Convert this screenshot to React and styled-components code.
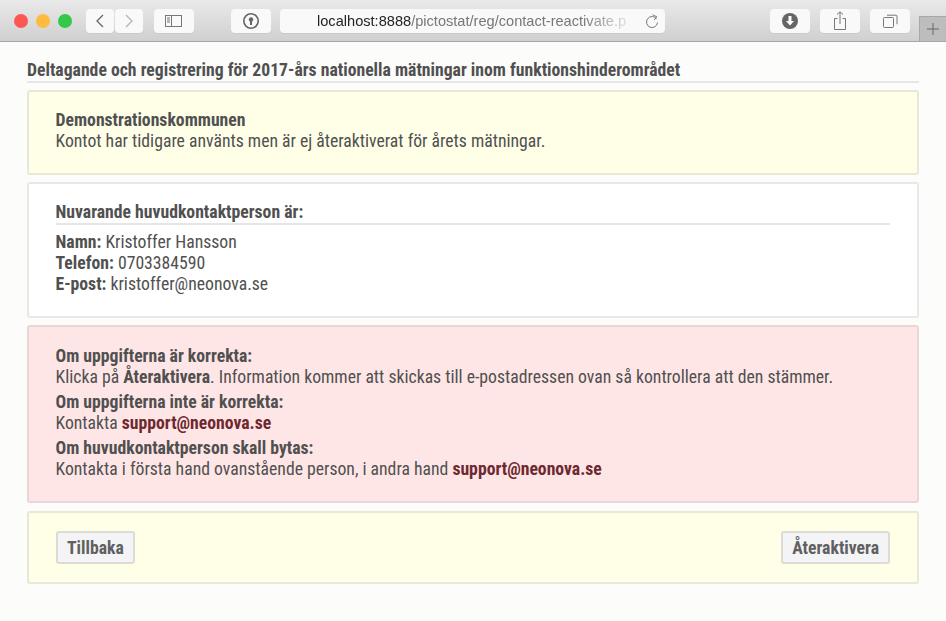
import React from "react";
import styled, { createGlobalStyle } from "styled-components";

const Global = createGlobalStyle`
  html, body { margin: 0; padding: 0; background: #fcfcfb; }
  body { font-family: "Roboto", "Liberation Sans", sans-serif; font-stretch: 75%; color: #505050; }
`;

const App = () => (
  <Window>
    <Global />
    <Toolbar>
      <Lights>
        <Light color="#fc5753" />
        <Light color="#fdbc40" />
        <Light color="#34c84a" />
      </Lights>
      <NavGroup>
        <ToolButton width={28}>
          <svg width="12" height="16" viewBox="0 0 12 16"><path d="M9 2 3 8l6 6" fill="none" stroke="#666" strokeWidth="1.3" /></svg>
        </ToolButton>
        <ToolButton width={28}>
          <svg width="12" height="16" viewBox="0 0 12 16"><path d="m3 2 6 6-6 6" fill="none" stroke="#b4b4b4" strokeWidth="1.3" /></svg>
        </ToolButton>
      </NavGroup>
      <SidebarSlot>
        <ToolButton width={40}>
          <svg width="18" height="14" viewBox="0 0 18 14" fill="none" stroke="#777" strokeWidth="1"><rect x=".5" y="1.5" width="16" height="11" /><path d="M6.5 1.5v11M2 4h3M2 6h3M2 8h3" /></svg>
        </ToolButton>
      </SidebarSlot>
      <KeySlot>
        <ToolButton width={40}>
          <svg width="18" height="18" viewBox="0 0 18 18"><circle cx="9" cy="9" r="7.2" fill="none" stroke="#666" strokeWidth="1.6" /><circle cx="9" cy="7.5" r="2.2" fill="#666" /><rect x="8" y="8" width="2" height="5" fill="#666" /></svg>
        </ToolButton>
      </KeySlot>
      <Address>
        <Url><b>localhost:8888</b>/pictostat/reg/contact-reactivate.p</Url>
        <svg width="14" height="15" viewBox="0 0 14 15" fill="none" stroke="#777" strokeWidth="1"><path d="M11.6 5A5.5 5.5 0 1 0 12.5 8.5" /><path d="M7.5 0.8 11.8 2.8 9.2 6" /></svg>
      </Address>
      <RightGroup>
        <ToolButton width={40}>
          <svg width="18" height="18" viewBox="0 0 18 18"><circle cx="9" cy="9" r="8" fill="#666" /><path d="M7.5 4h3v5h2.5L9 13.5 5 9h2.5z" fill="#fff" /></svg>
        </ToolButton>
        <ToolButton width={40}>
          <svg width="14" height="20" viewBox="0 0 14 20" fill="none" stroke="#777" strokeWidth="1"><path d="M4.5 7.5h-3v11h11v-11h-3M7 13V1M4 3.5 7 .8l3 2.7" /></svg>
        </ToolButton>
        <ToolButton width={40}>
          <svg width="15" height="15" viewBox="0 0 15 15" fill="none" stroke="#777" strokeWidth="1"><rect x=".5" y="3.5" width="10" height="10" rx="1" /><path d="M4 1.2h9a1 1 0 0 1 1 1v8" /></svg>
        </ToolButton>
      </RightGroup>
      <NewTab>
        <svg width="14" height="14" viewBox="0 0 14 14"><path d="M7 1v12M1 7h12" stroke="#666" strokeWidth="1" /></svg>
      </NewTab>
    </Toolbar>

    <Page>
      <Title>Deltagande och registrering för 2017-års nationella mätningar inom funktionshinderområdet</Title>

      <Card tone="note">
        <Line><strong>Demonstrationskommunen</strong></Line>
        <Line>Kontot har tidigare använts men är ej återaktiverat för årets mätningar.</Line>
      </Card>

      <Card tone="plain">
        <SubTitle>Nuvarande huvudkontaktperson är:</SubTitle>
        <Line><strong>Namn:</strong> Kristoffer Hansson</Line>
        <Line><strong>Telefon:</strong> 0703384590</Line>
        <Line><strong>E-post:</strong> kristoffer@neonova.se</Line>
      </Card>

      <Card tone="alert">
        <Para>
          <Line><strong>Om uppgifterna är korrekta:</strong></Line>
          <Line>Klicka på <strong>Återaktivera</strong>. Information kommer att skickas till e-postadressen ovan så kontrollera att den stämmer.</Line>
        </Para>
        <Para>
          <Line><strong>Om uppgifterna inte är korrekta:</strong></Line>
          <Line>Kontakta <MailLink>support@neonova.se</MailLink></Line>
        </Para>
        <Para>
          <Line><strong>Om huvudkontaktperson skall bytas:</strong></Line>
          <Line>Kontakta i första hand ovanstående person, i andra hand <MailLink>support@neonova.se</MailLink></Line>
        </Para>
      </Card>

      <ButtonCard>
        <ActionButton>Tillbaka</ActionButton>
        <ActionButton>Återaktivera</ActionButton>
      </ButtonCard>
    </Page>
  </Window>
);

export default App;

const tones = {
  note: { bg: "#ffffe8", border: "#e8e8d6", top: 18 },
  plain: { bg: "#ffffff", border: "#e8e8e8", top: 18 },
  alert: { bg: "#ffe6e6", border: "#ead6d6", top: 19 },
};

const Window = styled.div`
  width: 946px;
  height: 621px;
  overflow: hidden;
  display: flex;
  flex-direction: column;
`;

const Toolbar = styled.div`
  position: relative;
  height: 42px;
  flex: none;
  display: flex;
  align-items: flex-start;
  padding: 9px 0 0 14px;
  box-sizing: border-box;
  background: linear-gradient(#e9e9e9, #d0d0d0);
  border-bottom: 1px solid #a8a8a8;
`;

const Lights = styled.div`
  display: flex;
  gap: 8px;
  padding-top: 5px;
  margin-right: 14px;
`;

const Light = styled.span`
  width: 14px;
  height: 14px;
  border-radius: 50%;
  background: ${(p) => p.color};
`;

const NavGroup = styled.div`
  display: flex;
  gap: 1px;
`;

const SidebarSlot = styled.div`
  margin-left: 11px;
`;

const KeySlot = styled.div`
  margin-left: 37px;
`;

const ToolButton = styled.div`
  width: ${(p) => p.width}px;
  height: 24px;
  flex: none;
  display: flex;
  align-items: center;
  justify-content: center;
  background: #f9f9f9;
  border-radius: 4px;
  box-shadow: 0 1px 0 #cacaca;
`;

const Address = styled.div`
  width: 385px;
  height: 24px;
  margin-left: 9px;
  display: flex;
  align-items: center;
  justify-content: space-between;
  padding: 0 6px 0 37px;
  box-sizing: border-box;
  background: #f9f9f9;
  border-radius: 4px;
  box-shadow: 0 1px 0 #cacaca;
`;

const Url = styled.span`
  font-family: "Liberation Sans", Arial, sans-serif;
  font-stretch: normal;
  font-size: 14.6px;
  color: #777;
  white-space: nowrap;
  mask-image: linear-gradient(to right, #000 86%, rgba(0, 0, 0, 0.2) 100%);
  b {
    font-weight: normal;
    color: #222;
  }
`;

const RightGroup = styled.div`
  display: flex;
  gap: 10px;
  margin-left: 105px;
`;

const NewTab = styled.div`
  position: absolute;
  right: 0;
  top: 16px;
  width: 27px;
  height: 25px;
  display: flex;
  align-items: center;
  justify-content: center;
  background: #bdbdbd;
  border-left: 1px solid #a8a8a8;
  border-top: 1px solid #a8a8a8;
  box-sizing: border-box;
`;

const Page = styled.div`
  padding: 19px 27px 0;
  display: flex;
  flex-direction: column;
`;

const Title = styled.h1`
  margin: 0 0 7px;
  font-size: 17.7px;
  line-height: 19px;
  font-weight: 700;
  padding-bottom: 1px;
  border-bottom: 2px solid #e6e6e6;
`;

const Card = styled.div`
  padding: ${(p) => tones[p.tone].top}px 27px 21px 26.5px;
  margin-bottom: 7px;
  background: ${(p) => tones[p.tone].bg};
  border: 2px solid ${(p) => tones[p.tone].border};
  border-radius: 3px;
`;

const Line = styled.div`
  font-size: 17.7px;
  line-height: 21px;
  strong {
    font-weight: 700;
  }
`;

const Para = styled.div`
  margin-bottom: 4px;
  &:last-child {
    margin-bottom: 0;
  }
`;

const SubTitle = styled.div`
  font-size: 17.7px;
  line-height: 21px;
  font-weight: 700;
  border-bottom: 2px solid #e6e6e6;
  margin-bottom: 7px;
`;

const MailLink = styled.span`
  font-weight: 700;
  color: #6e2830;
`;

const ButtonCard = styled.div`
  display: flex;
  justify-content: space-between;
  padding: 18px 27px;
  background: #ffffe8;
  border: 2px solid #e8e8d6;
  border-radius: 3px;
  margin-top: 1px;
`;

const ActionButton = styled.div`
  height: 33px;
  box-sizing: border-box;
  padding: 0 9px;
  display: flex;
  align-items: center;
  font-size: 17.7px;
  font-stretch: 85%;
  font-weight: 700;
  color: #606060;
  background: #f4f4f6;
  border: 2px solid #dcdcd4;
  border-radius: 3px;
`;
